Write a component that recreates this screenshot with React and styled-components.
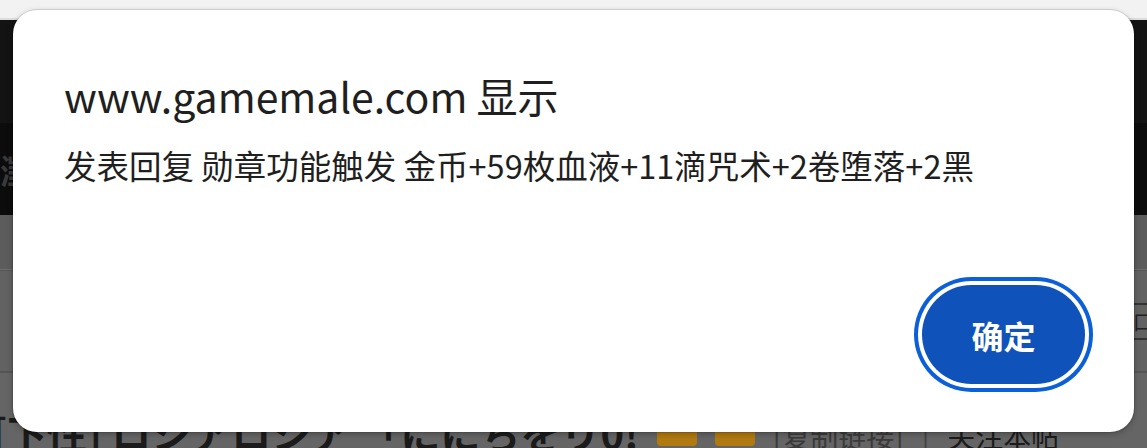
import styled, { createGlobalStyle } from "styled-components";

const GlobalStyle = createGlobalStyle`
  body {
    margin: 0;
    font-family: "Noto Sans CJK SC", "Noto Sans", sans-serif;
  }
`;

const Screen = styled.div`
  position: relative;
  width: 1147px;
  height: 448px;
  overflow: hidden;
  background: #656565;
`;

const Page = styled.div`
  display: flex;
  flex-direction: column;
  height: 100%;
`;

const TopStrip = styled.div`
  height: 18px;
  background: #f2f2f2;
  border-bottom: 2px solid #dcdcdc;
`;

const DarkBand = styled.div`
  height: 103px;
  background: #131313;
`;

const DarkerBand = styled.div`
  height: 92px;
  background: #0c0c0c;
  display: flex;
  align-items: center;
  font-size: 34px;
  font-weight: 700;
  color: #3a3a3a;
`;

const GreyBand = styled.div`
  height: 54px;
  background: #5c5c5c;
  border-bottom: 1px solid #6e6e6e;
`;

const NavRow = styled.div`
  height: 100px;
  background: #626262;
  border-top: 1px solid #555;
  border-bottom: 2px solid #555;
  display: flex;
  justify-content: flex-end;
  align-items: center;
`;

const NavTab = styled.div`
  font-size: 20px;
  color: #222;
  border-top: 2px solid #333;
  border-bottom: 2px solid #333;
  padding: 2px 0 2px 4px;
  margin-right: -6px;
`;

const ThreadRow = styled.div`
  flex: 1;
  display: flex;
  align-items: flex-end;
  gap: 18px;
  white-space: nowrap;
`;

const ThreadTitle = styled.span`
  font-size: 40px;
  font-weight: 700;
  color: #1b1b1b;
  line-height: 52px;
  margin-left: -8px;
  margin-bottom: -10px;
`;

const Badge = styled.span`
  display: inline-block;
  width: 40px;
  height: 30px;
  border-radius: 4px;
  background: #b07a10;
  margin-bottom: 2px;
`;

const ThreadMeta = styled.span`
  font-size: 28px;
  color: ${(p) => p.$color};
  line-height: 40px;
  margin-bottom: -8px;
`;

const Dialog = styled.div`
  position: absolute;
  left: 13px;
  top: 10px;
  width: 1121px;
  height: 422px;
  box-sizing: border-box;
  background: #ffffff;
  border-radius: 24px;
  box-shadow: 0 0 0 1px rgba(0, 0, 0, 0.1), 0 2px 6px rgba(0, 0, 0, 0.25);
  display: flex;
  flex-direction: column;
  padding: 57px 49px 48px 51px;
`;

const Title = styled.h1`
  margin: 0;
  font-size: 41px;
  line-height: 56px;
  font-weight: 400;
  color: #1f1f1f;
`;

const Message = styled.p`
  margin: 20px 0 0;
  font-size: 32.5px;
  line-height: 44px;
  color: #1f1f1f;
`;

const Footer = styled.div`
  margin-top: auto;
  display: flex;
  justify-content: flex-end;
`;

const OkButton = styled.button`
  width: 163px;
  height: 99px;
  border: none;
  border-radius: 50px;
  background: #0f52ba;
  color: #ffffff;
  font-family: inherit;
  font-size: 32px;
  font-weight: 700;
  box-shadow: 0 0 0 4px #ffffff, 0 0 0 8px #0b5fd8;
  cursor: pointer;
`;

export default function App() {
  return (
    <>
      <GlobalStyle />
      <Screen>
        <Page>
          <TopStrip />
          <DarkBand />
          <DarkerBand>澂</DarkerBand>
          <GreyBand />
          <NavRow>
            <NavTab>口</NavTab>
          </NavRow>
          <ThreadRow>
            <ThreadTitle>[下性] ロシアロシア 「ににちをリ0!</ThreadTitle>
            <Badge />
            <Badge />
            <ThreadMeta $color="#3a3a3a">[复制链接]</ThreadMeta>
            <ThreadMeta $color="#444">|</ThreadMeta>
            <ThreadMeta $color="#1b1b1b">关注本帖</ThreadMeta>
          </ThreadRow>
        </Page>
        <Dialog role="alertdialog">
          <Title>www.gamemale.com 显示</Title>
          <Message>发表回复 勋章功能触发 金币+59枚血液+11滴咒术+2卷堕落+2黑</Message>
          <Footer>
            <OkButton>确定</OkButton>
          </Footer>
        </Dialog>
      </Screen>
    </>
  );
}
